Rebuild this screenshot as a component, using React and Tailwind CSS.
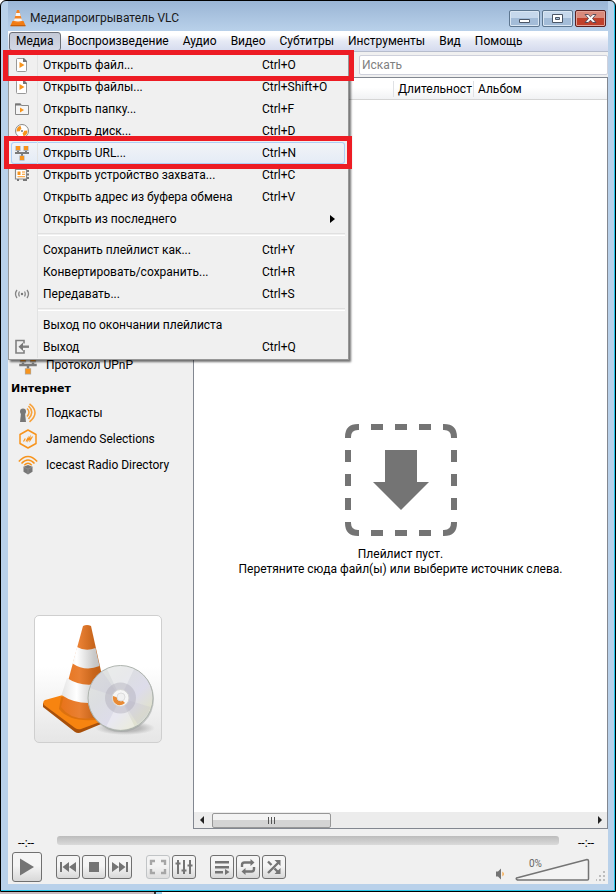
import React from 'react'

const mainMenu = ['Медиа', 'Воспроизведение', 'Аудио', 'Видео', 'Субтитры', 'Инструменты', 'Вид', 'Помощь']

function FileIcon() {
  return (
    <svg width="16" height="16" viewBox="0 0 16 16">
      <path d="M3.500 1.500h6l3 3v9a1 1 0 0 1-1 1h-8a1 1 0 0 1-1-1v-11a1 1 0 0 1 1-1z" fill="#fff" stroke="#999" />
      <path d="M9 1h1l3 3v1H9z" fill="#777" />
      <path d="M5.500 5v6l5-3z" fill="#f7941d" />
    </svg>
  )
}

function FolderIcon() {
  return (
    <svg width="16" height="16" viewBox="0 0 16 16">
      <path d="M1.500 3h5l1 1.500h7v9h-13z" fill="#f5f5f5" stroke="#888" strokeLinejoin="round" />
      <path d="M1 2.500h5.500l1 2H1z" fill="#777" />
      <path d="M6 6.500v5l4-2.500z" fill="#f7941d" />
    </svg>
  )
}

function DiscIcon() {
  return (
    <svg width="16" height="16" viewBox="0 0 16 16">
      <circle cx="8" cy="8" r="6.500" fill="#fff" stroke="#8a8a8a" />
      <path d="M8 8 2.500 8.500Q2.500 4 6.500 2.800zM8 8l5.500-.5Q13.500 12 9.500 13.200z" fill="#f7941d" />
      <circle cx="8" cy="8" r="2" fill="#fff" />
      <circle cx="8" cy="8" r="1" fill="#777" />
    </svg>
  )
}

function NetworkIcon({ size = 16 }) {
  return (
    <svg width={size} height={size} viewBox="0 0 16 16">
      <path d="M1 7h14v2H9v2H7V9H1zM3 6h2v1H3zM11 6h2v1h-2z" fill="#7a7a7a" />
      <path d="M1.500 1h5v5h-5zM9.500 1h5v5h-5zM5.500 10.500h5v5h-5z" fill="#a8a8a8" />
      <path d="M2 1h4v4H2zM10 1h4v4h-4zM6 11h4v4H6z" fill="#f7941d" />
    </svg>
  )
}

function CaptureIcon() {
  return (
    <svg width="16" height="16" viewBox="0 0 16 16">
      <path d="M1.500 2.500h11v9.500h-11z" fill="#fff" stroke="#888" strokeWidth="1.200" />
      <path d="M13 3h2v2h-2zM13 6.500h2v2h-2zM13 10h2v2h-2zM3 12h2v2H3zM9 12h4v2H9z" fill="#777" />
      <path d="M3.500 4.500h3v3.500h-3z" fill="#f7941d" />
      <path d="M8 4.500h3v1H8zM8 6.800h3v1H8zM3.500 9.200H11v1H3.500z" fill="#f7941d" />
    </svg>
  )
}

function StreamIcon() {
  return (
    <svg width="16" height="16" viewBox="0 0 16 16" fill="none" stroke="#858585" strokeWidth="1.300">
      <path d="M3 4Q0 8 3 12M5.500 5.500Q4 8 5.500 10.500M13 4q3 4 0 8M10.500 5.500Q12 8 10.500 10.500" />
      <circle cx="8" cy="8" r="1.200" fill="#777" stroke="none" />
    </svg>
  )
}

function ExitIcon() {
  return (
    <svg width="16" height="16" viewBox="0 0 16 16" fill="none" stroke="#808080">
      <path d="M10 4.500v-3H2v12.500h8v-3" strokeWidth="1.600" />
      <path d="M8 7.700h7" strokeWidth="2.400" />
      <path d="M4.500 7.700 9 3.500v8.400z" fill="#777" stroke="none" />
    </svg>
  )
}

function PodcastIcon() {
  return (
    <svg width="20" height="20" viewBox="0 0 20 20">
      <circle cx="5" cy="8.500" r="3" fill="#777" />
      <path d="M3 10h4l1 9H2z" fill="#777" />
      <path
        d="M9 5.500q4 3.500 0 8M10.500 3q6.500 6 0 13M11.500.800q11 8.700 0 18"
        fill="none"
        stroke="#f7a13a"
        strokeWidth="1.600"
      />
    </svg>
  )
}

function JamendoIcon() {
  return (
    <svg width="20" height="20" viewBox="0 0 20 20" fill="none" stroke="#f7941d">
      <path d="M10 1l8 4.500v9L10 19l-8-4.500v-9z" strokeWidth="1.500" strokeLinejoin="round" />
      <path d="M5.500 12.500 7.300 9.500M8 12.500 10 9v2.500L12 8v3.500l2.500-4" strokeWidth="1.200" />
    </svg>
  )
}

function IcecastIcon() {
  return (
    <svg width="20" height="20" viewBox="0 0 20 20">
      <path
        d="M.800 6.500q9.200-10 18.400 0M3.500 8.500q6.500-7 13 0M6.300 10.300q3.700-4 7.400 0"
        fill="none"
        stroke="#f7941d"
        strokeWidth="1.500"
      />
      <path d="M10 10l4.500 1.800v5L10 19.500l-4.500-2.700v-5z" fill="#777" />
      <path d="M5.500 12 10 14l4.500-2M10 14v5" fill="none" stroke="#999" strokeWidth="0.600" />
    </svg>
  )
}

const mediaMenu = [
  { label: 'Открыть файл...', keys: 'Ctrl+O', icon: FileIcon },
  { label: 'Открыть файлы...', keys: 'Ctrl+Shift+O', icon: FileIcon },
  { label: 'Открыть папку...', keys: 'Ctrl+F', icon: FolderIcon },
  { label: 'Открыть диск...', keys: 'Ctrl+D', icon: DiscIcon },
  { label: 'Открыть URL...', keys: 'Ctrl+N', icon: NetworkIcon, active: true },
  { label: 'Открыть устройство захвата...', keys: 'Ctrl+C', icon: CaptureIcon },
  { label: 'Открыть адрес из буфера обмена', keys: 'Ctrl+V' },
  { label: 'Открыть из последнего', submenu: true },
  { separator: true },
  { label: 'Сохранить плейлист как...', keys: 'Ctrl+Y' },
  { label: 'Конвертировать/сохранить...', keys: 'Ctrl+R' },
  { label: 'Передавать...', keys: 'Ctrl+S', icon: StreamIcon },
  { separator: true },
  { label: 'Выход по окончании плейлиста' },
  { label: 'Выход', keys: 'Ctrl+Q', icon: ExitIcon },
]

const internet = [
  { label: 'Подкасты', icon: PodcastIcon },
  { label: 'Jamendo Selections', icon: JamendoIcon },
  { label: 'Icecast Radio Directory', icon: IcecastIcon },
]

function Cone() {
  return (
    <svg width="16" height="18" viewBox="0 0 16 18">
      <path d="M2.500 12h11l2 4.500H.500z" fill="#f07c14" />
      <path d="M.500 16h15v1.300H.500z" fill="#c85f08" />
      <path d="M7 1h2l3.500 12q-4.500 2.500-9 0z" fill="#f58220" />
      <path d="M6.100 4h3.800l.800 3H5.300zM4.500 9.500h7l.6 2.300q-4 1.500-8.200 0z" fill="#f4f4f4" />
    </svg>
  )
}

function TitleBar() {
  return (
    <header className="flex h-[30px] items-center bg-linear-to-b from-[#9ab5d5] to-[#b9d1ea] pt-1 pr-[2px] pl-[2px]">
      <Cone />
      <h1 className="ml-1 flex-1 text-[12px] text-[#1a1a1a]">Медиапроигрыватель VLC</h1>
      <div className="flex gap-[2px]">
        <button
          aria-label="Свернуть"
          className="flex h-[17px] w-[31px] items-center justify-center rounded-[2px] border border-[#5d7690] bg-linear-to-b from-[#c6d8ec] from-50% to-[#a3bcd8] to-50% shadow-[inset_0_0_0_1px_#d9e6f3]"
        >
          <svg width="13" height="11" viewBox="0 0 13 11">
            <path d="M1.500 6.500h10v3h-10z" fill="#fff" stroke="#4b5666" />
          </svg>
        </button>
        <button
          aria-label="Развернуть"
          className="flex h-[17px] w-[31px] items-center justify-center rounded-[2px] border border-[#5d7690] bg-linear-to-b from-[#c6d8ec] from-50% to-[#a3bcd8] to-50% shadow-[inset_0_0_0_1px_#d9e6f3]"
        >
          <svg width="13" height="11" viewBox="0 0 13 11">
            <path d="M1.500 1.500h10v8h-10z" fill="#fff" stroke="#4b5666" />
            <path d="M4.500 4.500h4v2h-4z" fill="#a9c0da" stroke="#4b5666" />
          </svg>
        </button>
        <button
          aria-label="Закрыть"
          className="flex h-[17px] w-[31px] items-center justify-center rounded-[2px] border border-[#5b1f1f] bg-linear-to-b from-[#d98a7c] from-50% to-[#c0402b] to-50% shadow-[inset_0_0_0_1px_#e2a398]"
        >
          <svg width="13" height="11" viewBox="0 0 13 11">
            <path d="M1 1.500h3.200l2.300 2.300 2.300-2.300H12L8.500 5.500 12 9.500H8.800L6.500 7.200 4.200 9.500H1l3.500-4z" fill="#fff" stroke="#4b4454" strokeWidth="0.900" />
          </svg>
        </button>
      </div>
    </header>
  )
}

function MediaMenu() {
  return (
    <div
      role="menu"
      className="absolute top-[20px] left-0 z-10 w-[341px] border border-[#979797] bg-[#f0f0f0] pt-[2px] pr-[3px] pb-px pl-[2px] shadow-[2px_2px_2px_rgba(0,0,0,0.55)]"
    >
      {mediaMenu.map((item, i) => {
        if (item.separator) {
          return (
            <div key={i} className="flex h-[9px]">
              <div className="w-[27px] border-r border-[#e2e3e3]" />
              <div className="my-[3px] flex-1 border-t border-b border-t-[#e0e0e0] border-b-white" />
            </div>
          )
        }
        const Icon = item.icon
        return (
          <button
            key={i}
            role="menuitem"
            className={`flex h-[22px] w-full items-center text-left ${
              item.active
                ? 'rounded-[3px] bg-linear-to-b from-[#f2f4f7] to-[#e4ebf6] shadow-[inset_0_0_0_1px_#aecff7]'
                : ''
            }`}
          >
            <span className="flex h-full w-[27px] items-center justify-center border-r border-[#e2e3e3] pr-1">
              {Icon && <Icon />}
            </span>
            <span className="ml-[5px] w-[219px] whitespace-nowrap">{item.label}</span>
            <span className="flex-1">{item.keys}</span>
            {item.submenu && (
              <svg width="5" height="8" viewBox="0 0 5 8" className="mr-[10px]">
                <path d="M0 0l5 4-5 4z" />
              </svg>
            )}
          </button>
        )
      })}
    </div>
  )
}

function MenuBar() {
  return (
    <nav className="relative flex h-[21px] items-center border-b border-[#b6bccc] bg-linear-to-b from-white from-20% via-[#e6eaf5] via-50% to-[#d5dbee] pl-px">
      {mainMenu.map((label, i) => (
        <button
          key={label}
          className={`h-[19px] rounded-[3px] border px-[6px] ${
            i === 0 ? 'border-[#6b6f78] bg-linear-to-b from-[#c4c9d6] to-[#d3d8e6]' : 'border-transparent'
          }`}
        >
          {label}
        </button>
      ))}
      <MediaMenu />
      <div className="absolute top-[19px] left-[-5px] z-20 h-[31px] w-[351px] border-5 border-[#ed1c24]" />
      <div className="absolute top-[105px] left-[-4px] z-20 h-[33px] w-[348px] border-5 border-[#ed1c24]" />
    </nav>
  )
}

function CoverArt() {
  return (
    <div className="h-32 w-32 rounded-[5px] border border-[#cfcfcf] bg-linear-to-b from-white from-40% to-[#e6e6e6]">
      <svg width="126" height="126" viewBox="0 0 126 126">
        <defs>
          <linearGradient id="orange" x1="0" x2="1">
            <stop offset="0" stopColor="#e8731a" />
            <stop offset="0.400" stopColor="#e98033" />
            <stop offset="0.700" stopColor="#c9661c" />
            <stop offset="1" stopColor="#b9590f" />
          </linearGradient>
          <linearGradient id="white" x1="0" x2="1">
            <stop offset="0" stopColor="#e4e4e4" />
            <stop offset="0.350" stopColor="#fff" />
            <stop offset="0.750" stopColor="#c9c9c9" />
            <stop offset="1" stopColor="#b9b9b9" />
          </linearGradient>
          <linearGradient id="disc" x1="0" y1="0" x2="1" y2="1">
            <stop offset="0" stopColor="#e3e5e0" />
            <stop offset="0.350" stopColor="#dcdee1" />
            <stop offset="0.600" stopColor="#dddcea" />
            <stop offset="0.800" stopColor="#e0e1cf" />
            <stop offset="1" stopColor="#cfdbe8" />
          </linearGradient>
          <radialGradient id="shade">
            <stop offset="0.500" stopColor="#999" stopOpacity="0.600" />
            <stop offset="1" stopColor="#999" stopOpacity="0" />
          </radialGradient>
        </defs>
        <ellipse cx="90" cy="112" rx="30" ry="7" fill="url(#shade)" />
        <path d="M8 87v4l32 25q3 2 7 0l24-10v-5z" fill="#a8500a" />
        <path d="M10 84 28 79l45 20v4L46 113q-3 1-6-1L9 89q-2-3 1-5z" fill="#f78410" />
        <path d="M26 81 24 93q12 15 44 10L60 80z" fill="#c9640f" opacity="0.600" />
        <path d="M48 10q4-2 8 0L72 82l-4 18q-30 8-42-9z" fill="url(#orange)" />
        <path d="M42 31q9 5 18.500 1l4 18q-14 6-27-2.500zM32 62q15 10 34 5l4 18q-26 6-43.500-6z" fill="url(#white)" />
        <circle cx="86" cy="83" r="33" fill="#9c9f9d" opacity="0.500" />
        <circle cx="85.500" cy="82" r="32.500" fill="url(#disc)" stroke="#aeb4ae" />
        <path d="M85.500 82 72 53q13-6 27 0zM85.500 82l14 28q-13 7-28 0z" fill="#fff" opacity="0.350" />
        <path d="M85.500 82 55 72q3-10 12-17zM85.500 82l30 9q-4 12-13 17z" fill="#b8b4cf" opacity="0.200" />
        <circle cx="85.500" cy="82" r="15.500" fill="#aaa8b5" opacity="0.400" />
        <circle cx="85.500" cy="82" r="8.500" fill="#f6f6f6" stroke="#d4d4d4" />
        <path d="M78 80q8 2 12 7-5 4-9 1-4-3-3-8z" fill="#e88a35" />
        <circle cx="86" cy="81" r="4" fill="#f1f1f1" stroke="#ddd" />
      </svg>
    </div>
  )
}

function Sidebar() {
  return (
    <aside className="flex w-[185px] shrink-0 flex-col pt-[300px]">
      <a href="#upnp" className="flex h-[26px] items-center gap-2 pl-[10px]">
        <NetworkIcon size={20} />
        Протокол UPnP
      </a>
      <h2 className="h-[22px] pl-[3px] font-['DejaVu_Sans'] text-[11px] leading-[22px] font-bold">Интернет</h2>
      {internet.map(item => {
        const Icon = item.icon
        return (
          <a key={item.label} href="#internet" className="flex h-[26px] items-center gap-2 pl-[10px]">
            <Icon />
            {item.label}
          </a>
        )
      })}
      <div className="mt-auto pb-[86px] pl-[26px]">
        <CoverArt />
      </div>
    </aside>
  )
}

function Playlist() {
  return (
    <main className="flex min-w-0 flex-1 flex-col">
      <div className="flex h-[25px] items-center justify-end">
        <input
          type="text"
          aria-label="Искать"
          placeholder="Искать"
          className="h-[20px] w-[249px] rounded-[2px] border border-[#cfd1dc] bg-white px-[2px] placeholder:text-[#808080]"
        />
      </div>
      <div className="flex flex-1 flex-col border border-[#828790] bg-white">
        <div className="flex h-[22px] items-center justify-end border-b border-[#d5d5d5] bg-linear-to-b from-white from-45% to-[#f1f2f4]">
          <span className="w-[80px] truncate border-l border-[#e0e2e5] pl-1 text-clip">Длительност</span>
          <span className="w-[134px] border-l border-[#e0e2e5] pl-1">Альбом</span>
        </div>
        <div className="flex flex-1 flex-col items-center justify-center pt-[89px]">
          <svg width="112" height="112" viewBox="0 0 112 112">
            <g fill="none" stroke="#747474" strokeWidth="6">
              <path d="M3 14V13Q3 3 13 3h1M98 3h1q10 0 10 10v1M109 98v1q0 10-10 10h-1M14 109h-1q-10 0-10-10v-1" />
              <path d="M26 3h12M50 3h12M74 3h12M26 109h12M50 109h12M74 109h12M3 26v12M3 50v12M3 74v12M109 26v12M109 50v12M109 74v12" />
            </g>
            <path d="M40 26h32v32h12L56 86 28 58h12z" fill="#747474" />
          </svg>
          <p className="mt-[11px] text-center leading-[15px]">
            Плейлист пуст.
            <br />
            Перетяните сюда файл(ы) или выберите источник слева.
          </p>
        </div>
        <div className="flex h-[16px] items-center bg-[#ececec] pr-[5px] pl-[6px]">
          <svg width="4" height="8" viewBox="0 0 4 8">
            <path d="M4 0v8L0 4z" fill="#222" />
          </svg>
          <div className="ml-2 flex h-[15px] w-[119px] items-center justify-center gap-px rounded-[2px] border border-[#979797] bg-linear-to-b from-[#f3f3f3] from-45% to-[#d4d4d4] to-50%">
            <svg width="8" height="7" viewBox="0 0 8 7">
              <path d="M.500 0v7M3.500 0v7M6.500 0v7" stroke="#555" />
            </svg>
          </div>
          <svg width="4" height="8" viewBox="0 0 4 8" className="ml-auto">
            <path d="M0 0v8l4-4z" fill="#222" />
          </svg>
        </div>
      </div>
    </main>
  )
}

function ControlButton({ label, large, disabled, children }) {
  return (
    <button
      aria-label={label}
      disabled={disabled}
      className={`flex items-center justify-center rounded-[3px] border bg-linear-to-b from-[#f5f5f5] from-45% to-[#d8d8d8] ${
        large ? 'h-[30px] w-[30px]' : 'h-[24px] w-[24px]'
      } ${disabled ? 'border-[#aeb2b5] opacity-70' : 'border-[#707070]'}`}
    >
      {children}
    </button>
  )
}

function Controls() {
  return (
    <footer className="h-[55px]">
      <div className="flex h-[23px] items-center">
        <span className="w-[49px] pt-[5px] pl-[10px]">--:--</span>
        <input
          type="range"
          aria-label="Позиция"
          defaultValue="0"
          className="h-[9px] min-w-0 flex-1 appearance-none rounded-[3px] bg-linear-to-b from-[#bcbcbc] to-[#dadada] [&::-webkit-slider-thumb]:appearance-none"
        />
        <span className="w-[49px] pt-[5px] pl-[19px]">--:--</span>
      </div>
      <div className="flex h-[30px] items-center pl-1">
        <ControlButton label="Воспроизвести" large>
          <svg width="16" height="18" viewBox="0 0 16 18">
            <path d="M1 0.500v17L15 9z" fill="#747474" />
          </svg>
        </ControlButton>
        <div className="ml-[14px] flex gap-[2px]">
          <ControlButton label="Назад">
            <svg width="16" height="12" viewBox="0 0 16 12" fill="#747474">
              <path d="M0 1h2v10H0zM9 1v10L2.500 6zM16 1v10L9 6z" />
            </svg>
          </ControlButton>
          <ControlButton label="Стоп">
            <svg width="12" height="12" viewBox="0 0 12 12" fill="#747474">
              <path d="M1 1h10v10H1z" />
            </svg>
          </ControlButton>
          <ControlButton label="Вперёд">
            <svg width="16" height="12" viewBox="0 0 16 12" fill="#747474">
              <path d="M14 1h2v10h-2zM7 1v10l6.500-5zM0 1v10l7-5z" />
            </svg>
          </ControlButton>
        </div>
        <div className="ml-[14px] flex gap-[2px]">
          <ControlButton label="Полный экран" disabled>
            <svg width="18" height="16" viewBox="0 0 18 16" fill="none" stroke="#888" strokeWidth="2.400">
              <path d="M2 6V2h4M12 2h4v4M16 10v4h-4M6 14H2v-4" />
            </svg>
          </ControlButton>
          <ControlButton label="Эквалайзер">
            <svg width="18" height="16" viewBox="0 0 18 16" fill="none" stroke="#747474" strokeWidth="2">
              <path d="M3 1v14M9 1v14M15 1v14M.500 4.500h5M6.500 11.500h5M12.500 6.500h5" />
            </svg>
          </ControlButton>
        </div>
        <div className="ml-[14px] flex gap-[2px]">
          <ControlButton label="Плейлист">
            <svg width="16" height="16" viewBox="0 0 16 16">
              <path d="M1 2h14v2.400H1zM1 7h14v2.400H1zM1 12h8v2.400H1z" fill="#747474" />
              <path d="M11 10v6l4.500-3z" fill="#747474" />
            </svg>
          </ControlButton>
          <ControlButton label="Повтор">
            <svg width="16" height="16" viewBox="0 0 16 16" fill="none" stroke="#747474" strokeWidth="2.400">
              <path d="M2 8V6q0-2.500 2.500-2.500H11M14 8v2q0 2.500-2.500 2.500H5" />
              <path d="M10.500 0v7l4-3.500zM5.500 9v7l-4-3.500z" fill="#747474" stroke="none" />
            </svg>
          </ControlButton>
          <ControlButton label="Случайно">
            <svg width="16" height="16" viewBox="0 0 16 16" fill="none" stroke="#747474" strokeWidth="2.400">
              <path d="M2 14 12.500 3.500M2 2.500 5.500 6M8.500 9.500l4 4" />
              <path d="M14.500 1v6l-6-6zM14.500 15V9l-6 6z" fill="#747474" stroke="none" />
            </svg>
          </ControlButton>
        </div>
        <button aria-label="Без звука" className="mt-[14px] ml-auto">
          <svg width="12" height="12" viewBox="0 0 12 12">
            <path d="M1 3.500h2L6 .500v11l-3-3H1z" fill="#747474" />
            <path d="M7.500 3.500q2.500 2.500 0 5z" fill="#f7941d" />
          </svg>
        </button>
        <label className="relative mt-[6px] ml-[8px] h-[24px] w-[75px]">
          <svg width="75" height="24" viewBox="0 0 75 24">
            <path d="M1.500 20 72 1.500q1.500 0 1.500 1.500v18q0 1-1 1h-70q-2-1-1-2z" fill="#f3f3f3" stroke="#747474" strokeWidth="1.500" />
          </svg>
          <span className="absolute top-0 left-[14px] text-[10px] leading-[12px] text-[#666]">0%</span>
          <input type="range" aria-label="Громкость" defaultValue="0" className="absolute inset-0 w-full opacity-0" />
        </label>
        <svg width="10" height="10" viewBox="0 0 10 10" className="mt-[18px] mr-[2px] ml-[6px]" fill="#bdbdbd">
          <path d="M7 0h2v2H7zM7 4h2v2H7zM7 8h2v2H7zM3 4h2v2H3zM3 8h2v2H3zM0 8h1v2H0z" />
        </svg>
      </div>
    </footer>
  )
}

export default function App() {
  return (
    <div className="flex min-h-screen flex-col bg-white font-['Roboto','Open_Sans',sans-serif] text-[12px] leading-[16px] text-black">
      <div className="flex flex-1 flex-col rounded-t-[6px] border border-black bg-[#b9d1ea] shadow-[inset_-1px_-1px_0_#26c6e8]">
        <div className="flex flex-1 flex-col px-[7px] pb-[7px]">
          <TitleBar />
          <div className="flex flex-1 flex-col bg-[#f0f0f0]">
            <MenuBar />
            <div className="flex flex-1">
              <Sidebar />
              <Playlist />
            </div>
            <Controls />
          </div>
        </div>
      </div>
      <div className="flex h-[2px]">
        <div className="w-1/4 bg-[#c9bcc0]" />
        <div className="w-2 border-l-2 border-[#333] bg-[#9fd0ea]" />
      </div>
    </div>
  )
}
